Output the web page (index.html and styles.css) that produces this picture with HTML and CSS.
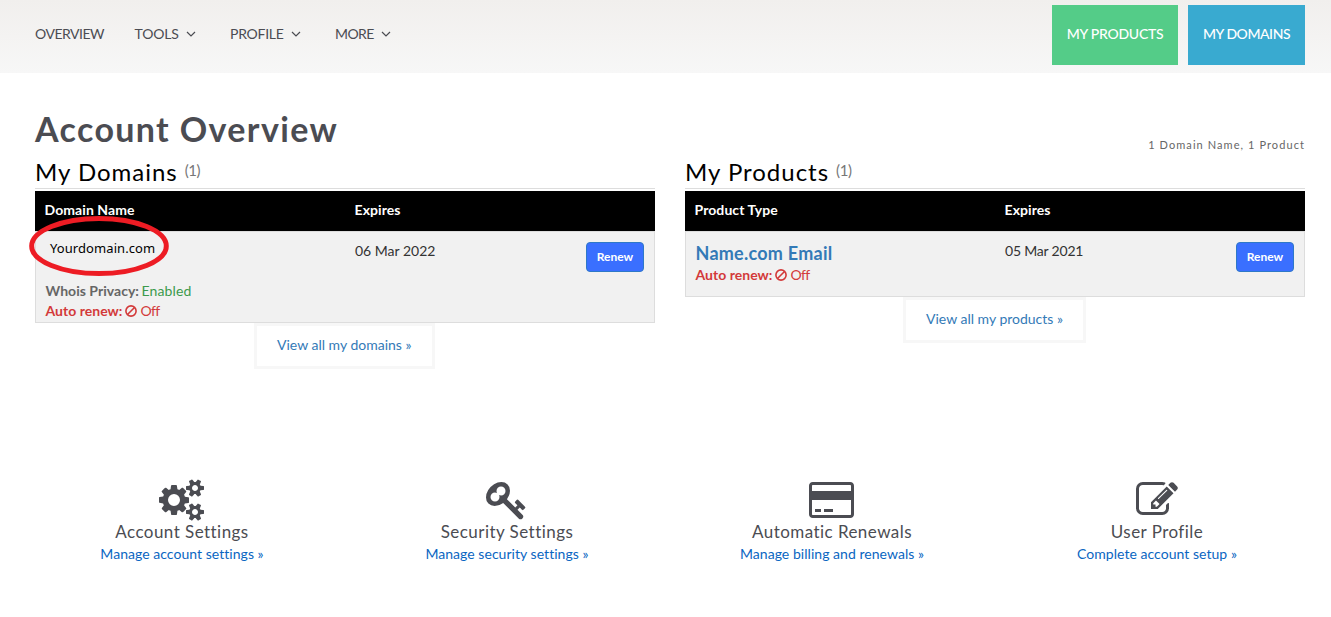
FILE: index.html
```html
<!DOCTYPE html>
<html lang="en">
<head>
<meta charset="utf-8">
<title>Account Overview</title>
<link rel="stylesheet" href="styles.css">
</head>
<body>
<header class="topbar">
  <nav class="nav">
    <a class="nav-item n1"><span>OVERVIEW</span></a>
    <a class="nav-item n2"><span>TOOLS</span><svg class="chev" viewBox="0 0 10 6"><path d="M1 1l4 4 4-4"/></svg></a>
    <a class="nav-item n3"><span>PROFILE</span><svg class="chev" viewBox="0 0 10 6"><path d="M1 1l4 4 4-4"/></svg></a>
    <a class="nav-item n4"><span>MORE</span><svg class="chev" viewBox="0 0 10 6"><path d="M1 1l4 4 4-4"/></svg></a>
  </nav>
  <div class="actions">
    <a class="action products"><span>MY PRODUCTS</span></a>
    <a class="action domains"><span>MY DOMAINS</span></a>
  </div>
</header>
<main class="page">
  <div class="title-row">
    <h1 class="title"><span>Account Overview</span></h1>
    <p class="summary"><span>1 Domain Name, 1 Product</span></p>
  </div>
  <div class="panels">
    <section class="panel">
      <h2 class="panel-title"><span>My Domains</span><small>(1)</small></h2>
      <div class="thead"><div class="th1"><span>Domain Name</span></div><div class="th2"><span>Expires</span></div></div>
      <div class="row row-domain">
        <div class="info">
          <div class="domain"><span>Yourdomain.com</span>
            <svg class="ring" viewBox="0 0 142 62"><ellipse cx="71" cy="31" rx="67.3" ry="27.6"/></svg>
          </div>
          <div class="meta privacy"><b>Whois Privacy:</b><span>Enabled</span></div>
          <div class="meta renew-off"><b>Auto renew:</b><svg class="ban" viewBox="0 0 12 12"><circle cx="6" cy="6" r="5.1"/><path d="M2.5 9.5l7-7"/></svg><span>Off</span></div>
        </div>
        <div class="date"><span>06 Mar 2022</span></div>
        <button class="renew"><span>Renew</span></button>
      </div>
      <a class="view-all va1"><span>View all my domains »</span></a>
    </section>
    <section class="panel">
      <h2 class="panel-title"><span>My Products</span><small>(1)</small></h2>
      <div class="thead"><div class="th1"><span>Product Type</span></div><div class="th2"><span>Expires</span></div></div>
      <div class="row row-product">
        <div class="info">
          <div class="product"><span>Name.com Email</span></div>
          <div class="meta renew-off"><b>Auto renew:</b><svg class="ban" viewBox="0 0 12 12"><circle cx="6" cy="6" r="5.1"/><path d="M2.5 9.5l7-7"/></svg><span>Off</span></div>
        </div>
        <div class="date d2"><span>05 Mar 2021</span></div>
        <button class="renew"><span>Renew</span></button>
      </div>
      <a class="view-all va2"><span>View all my products »</span></a>
    </section>
  </div>
  <div class="features">
    <section class="feature">
      <svg class="icon wide" viewBox="0 0 1920 1792"><path d="M896 896q0-106-75-181t-181-75-181 75-75 181 75 181 181 75 181-75 75-181zm768 512q0-52-38-90t-90-38-90 38-38 90q0 53 37.5 90.5t90.5 37.5 90.5-37.5 37.5-90.5zm0-1024q0-52-38-90t-90-38-90 38-38 90q0 53 37.5 90.5t90.5 37.5 90.5-37.5 37.5-90.5zm-384 421v185q0 10-7 19.5t-16 10.5l-155 24q-11 35-32 76 34 48 90 115 7 11 7 20 0 12-7 19-23 30-82.5 89.5t-78.5 59.5q-11 0-21-7l-115-90q-37 19-77 31-11 108-23 155-7 24-30 24h-186q-11 0-20-7.5t-10-17.5l-23-153q-34-10-75-31l-118 89q-7 7-20 7-11 0-21-8-144-133-144-160 0-9 7-19 10-14 41-53t47-61q-23-44-35-82l-152-24q-10-1-17-9.5t-7-19.5v-185q0-10 7-19.5t16-10.5l155-24q11-35 32-76-34-48-90-115-7-11-7-20 0-12 7-20 22-30 82-89t79-59q11 0 21 7l115 90q34-18 77-32 11-108 23-154 7-24 30-24h186q11 0 20 7.5t10 17.5l23 153q34 10 75 31l118-89q8-7 20-7 11 0 21 8 144 133 144 160 0 8-7 19-12 16-42 54t-45 60q23 48 34 82l152 23q10 2 17 10.5t7 19.5zm640 533v140q0 16-149 31-12 27-30 52 51 113 51 138 0 4-4 7-122 71-124 71-8 0-46-47t-52-68q-20 2-30 2t-30-2q-14 21-52 68t-46 47q-2 0-124-71-4-3-4-7 0-25 51-138-18-25-30-52-149-15-149-31v-140q0-16 149-31 13-29 30-52-51-113-51-138 0-4 4-7 4-2 35-20t59-34 30-16q8 0 46 46.5t52 67.5q20-2 30-2t30 2q51-71 92-112l6-2q4 0 124 70 4 3 4 7 0 25-51 138 17 23 30 52 149 15 149 31zm0-1024v140q0 16-149 31-12 27-30 52 51 113 51 138 0 4-4 7-122 71-124 71-8 0-46-47t-52-68q-20 2-30 2t-30-2q-14 21-52 68t-46 47q-2 0-124-71-4-3-4-7 0-25 51-138-18-25-30-52-149-15-149-31v-140q0-16 149-31 13-29 30-52-51-113-51-138 0-4 4-7 4-2 35-20t59-34 30-16q8 0 46 46.5t52 67.5q20-2 30-2t30 2q51-71 92-112l6-2q4 0 124 70 4 3 4 7 0 25-51 138 17 23 30 52 149 15 149 31z"/></svg>
      <h3><span>Account Settings</span></h3><a><span>Manage account settings »</span></a>
    </section>
    <section class="feature">
      <svg class="icon" viewBox="0 0 1792 1792"><path d="M832 512q0-80-56-136t-136-56-136 56-56 136q0 42 19 83-41-19-83-19-80 0-136 56t-56 136 56 136 136 56 136-56 56-136q0-42-19-83 41 19 83 19 80 0 136-56t56-136zm851 704q0 17-49 66t-66 49q-9 0-28.5-16t-36.5-33-38.5-40-24.5-26l-96 96 220 220q28 28 28 68 0 42-39 81t-81 39q-40 0-68-28l-671-671q-176 131-365 131-163 0-265.5-102.5t-102.5-265.5q0-160 95-313t248-248 313-95q163 0 265.5 102.5t102.5 265.5q0 189-131 365l355 355 96-96q-3-3-26-24.5t-40-38.5-33-36.5-16-28.5q0-17 49-66t66-49q13 0 23 10 6 6 46 44.5t82 79.5 86.5 86 73 78 28.5 41z"/></svg>
      <h3><span>Security Settings</span></h3><a><span>Manage security settings »</span></a>
    </section>
    <section class="feature">
      <svg class="icon wide" viewBox="0 0 1920 1792"><path d="M1760 128q66 0 113 47t47 113v1216q0 66-47 113t-113 47h-1600q-66 0-113-47t-47-113v-1216q0-66 47-113t113-47h1600zm-1600 128q-13 0-22.5 9.5t-9.5 22.5v224h1664v-224q0-13-9.5-22.5t-22.5-9.5h-1600zm1600 1280q13 0 22.5-9.5t9.5-22.5v-608h-1664v608q0 13 9.5 22.5t22.5 9.5h1600zm-1504-128v-128h256v128h-256zm384 0v-128h384v128h-384z"/></svg>
      <h3><span>Automatic Renewals</span></h3><a><span>Manage billing and renewals »</span></a>
    </section>
    <section class="feature">
      <svg class="icon" viewBox="0 0 1792 1792"><path d="M888 1184l116-116-152-152-116 116v56h96v96h56zm440-720q-16-16-33 1l-350 350q-17 17-1 33t33-1l350-350q17-17 1-33zm80 594v190q0 119-84.5 203.5t-203.5 84.5h-832q-119 0-203.5-84.5t-84.5-203.5v-832q0-119 84.5-203.5t203.5-84.5h832q63 0 117 25 15 7 18 23 3 17-9 29l-49 49q-14 14-32 8-23-6-45-6h-832q-66 0-113 47t-47 113v832q0 66 47 113t113 47h832q66 0 113-47t47-113v-126q0-13 9-22l64-64q15-15 35-7t20 29zm-96-738l288 288-672 672h-288v-288zm444 132l-92 92-288-288 92-92q28-28 68-28t68 28l152 152q28 28 28 68t-28 68z"/></svg>
      <h3><span>User Profile</span></h3><a><span>Complete account setup »</span></a>
    </section>
  </div>
</main>
</body>
</html>
```
FILE: styles.css
```css
* { box-sizing: border-box; }
body { margin: 0; background: #fff; color: #4b4c52; font-family: Lato, "Liberation Sans", sans-serif; font-size: 14px; line-height: 20px; }
h1, h2, h3, p { margin: 0; font-weight: 400; }
span, small, b { white-space: nowrap; }
.topbar { display: flex; justify-content: space-between; height: 73px; padding: 5px 26px 0 35px; background: linear-gradient(#f1efed, #f7f7f7); }
.nav { display: flex; height: 58px; align-items: center; }
.nav-item { display: flex; align-items: center; }
.nav-item.n1 { width: 99.5px; letter-spacing: -0.5px; }
.nav-item.n2 { width: 95.5px; letter-spacing: -0.15px; }
.nav-item.n3 { width: 105px; letter-spacing: -0.25px; }
.nav-item.n4 { letter-spacing: -0.6px; }
.chev { width: 10px; height: 6px; margin-left: 7.5px; fill: none; stroke: #4b4c52; stroke-width: 1.2; }
.actions { display: flex; gap: 10px; }
.action { display: flex; justify-content: center; height: 60px; padding-top: 19px; color: #fff; font-weight: 500; letter-spacing: -0.25px; }
.products { width: 126px; background: #54cc88; }
.domains { width: 117px; background: #39aad0; letter-spacing: -0.45px; }
.page { padding: 0 26px 0 35px; }
.title-row { display: flex; justify-content: space-between; height: 85px; padding-top: 35px; }
.title { font-size: 34px; line-height: 42px; font-weight: 700; letter-spacing: 1.36px; }
.summary { padding-top: 27px; font-size: 11px; color: #666; letter-spacing: 1.08px; }
.panels { display: grid; grid-template-columns: 620px 620px; gap: 30px; height: 261px; }
.panel { display: flex; flex-direction: column; }
.panel-title { display: flex; gap: 7px; height: 31px; margin: 0 0 2px; border-bottom: 1px solid #ddd; color: #000; font-size: 24px; line-height: 28px; letter-spacing: 0.98px; }
.panel-title small { font-size: 15px; line-height: 25px; color: #777; letter-spacing: -0.4px; }
.thead { display: flex; height: 40px; padding: 9px 9.5px; background: #000; color: #fff; font-weight: 700; letter-spacing: 0.08px; }
.th1 { width: 310px; }
.row { display: flex; align-items: flex-start; padding: 10px 10px 0 9.5px; border: 1px solid #ddd; background: #f1f1f1; }
.row-domain { height: 92px; }
.row-product { height: 66px; }
.info { width: 309.5px; }
.domain { position: relative; height: 39px; padding-left: 4.5px; margin: -4px 0 4px; color: #000; font-family: "Noto Sans", sans-serif; font-size: 13px; letter-spacing: 0.08px; }
.ring { position: absolute; left: -17.5px; top: -23px; width: 142px; height: 62px; fill: none; stroke: #ed1c24; stroke-width: 5; }
.product { height: 23px; font-size: 18px; line-height: 22px; font-weight: 700; color: #337ab7; letter-spacing: 0.25px; }
.meta { display: flex; align-items: center; gap: 2.5px; letter-spacing: 0.03px; }
.privacy { color: #666; }
.privacy span { color: #3c9a4c; letter-spacing: 0.15px; }
.renew-off { color: #d33a3a; }
.renew-off span { margin-left: 1px; letter-spacing: -0.6px; }
.ban { width: 12px; height: 12px; fill: none; stroke: #d33a3a; stroke-width: 1.6; }
.date { flex: 1; margin-top: -1px; color: #333; }
.d2 { letter-spacing: -0.2px; }
.renew { width: 58px; height: 30px; padding: 0; border: 1px solid #2e78c8; border-radius: 4px; background: #3a6fff; color: #fff; font: 700 12px/18px Lato, sans-serif; }
.view-all { align-self: center; height: 46px; padding: 9px 20px; border: 3px solid #f7f7f7; color: #337ab7; }
.va1 { margin-right: 1px; padding-right: 20.5px; }
.va2 { margin-right: 1px; }
.features { display: grid; grid-template-columns: repeat(4, 325px); margin: 60px 0 0 -15.5px; }
.feature { display: flex; flex-direction: column; align-items: center; }
.icon { width: 42px; height: 42px; fill: #4b4c52; }
.icon.wide { width: 45px; margin-right: 1px; }
.feature h3 { height: 23px; font-size: 17px; line-height: 21px; letter-spacing: 0.45px; }
.feature a { color: #0a66c2; letter-spacing: 0.04px; }
```
